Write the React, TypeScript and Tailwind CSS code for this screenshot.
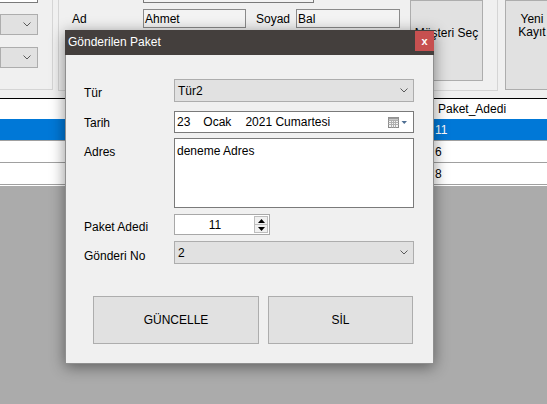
import React from 'react';

const Chevron = () => (
  <svg width="8" height="5" viewBox="0 0 8 5" className="shrink-0">
    <path d="M0.5 0.5 L4 4 L7.5 0.5" fill="none" stroke="#5a5a5a" strokeWidth="1" />
  </svg>
);

const Combo = ({ value, w }: { value: string; w: string }) => (
  <div className={`${w} h-[23px] border border-[#adadad] bg-[#e1e1e1] flex items-center pl-[3px] pr-[5px]`}>
    <span className="flex-1 leading-[14px]">{value}</span>
    <Chevron />
  </div>
);

const CalendarIcon = () => (
  <svg width="20" height="11" viewBox="0 0 20 11" className="shrink-0">
    <rect x="0.5" y="0.5" width="10" height="10" fill="#f4f4f4" stroke="#8a8a8a" />
    <path d="M0.5 3.5 H10.5 M0.5 5.5 H10.5 M0.5 7.5 H10.5 M3.5 3 V10.5 M5.5 3 V10.5 M7.5 3 V10.5" stroke="#b0b0b0" strokeWidth="1" />
    <rect x="0.5" y="0.5" width="10" height="2" fill="#9a9a9a" />
    <path d="M13.5 4 H19 L16.25 7 Z" fill="#4f6f93" />
  </svg>
);

const Spinner = () => (
  <div className="flex flex-col w-[14px] h-[17px] mr-[1px] border border-[#bdbdbd] bg-[#f0f0f0]">
    <div className="flex-1 flex items-center justify-center border-b border-[#bdbdbd]">
      <svg width="7" height="4" viewBox="0 0 7 4"><path d="M0 4 L3.5 0 L7 4 Z" fill="#000" /></svg>
    </div>
    <div className="flex-1 flex items-center justify-center">
      <svg width="7" height="4" viewBox="0 0 7 4"><path d="M0 0 L3.5 4 L7 0 Z" fill="#000" /></svg>
    </div>
  </div>
);

export default function App() {
  return (
    <div className="relative w-[547px] h-[404px] overflow-hidden bg-[#f0f0f0] text-[12px] text-black font-['Liberation_Sans',Arial,sans-serif]">
      {/* background window */}
      <div className="flex h-[98px]">
        <div className="w-[53px] h-[90px] border-r border-b border-[#d5d5d5] shrink-0">
          <div className="w-[38px] h-[3px] bg-white border-r border-b border-[#7a7a7a]" />
          <div className="mt-[11px] w-[38px] h-[21px] border border-[#adadad] bg-[#e1e1e1] flex items-center justify-end pr-[6px]">
            <Chevron />
          </div>
          <div className="mt-[12px] w-[38px] h-[21px] border border-[#adadad] bg-[#e1e1e1] flex items-center justify-end pr-[6px]">
            <Chevron />
          </div>
        </div>
        <div className="ml-[5px] w-[440px] h-[91px] border-l border-r border-b border-[#d5d5d5] flex shrink-0">
          <div className="w-[351px]">
            <div className="ml-[84px] w-[171px] h-[3px] border-x border-b border-[#7a7a7a] bg-[#f3f3f3]" />
            <div className="mt-[6px] flex h-[19px]">
              <div className="w-[84px] pl-[13px] flex items-center">Ad</div>
              <div className="w-[103px] border border-[#8a8a8a] bg-[#f3f3f3] pl-[1px] flex items-center">Ahmet</div>
              <div className="w-[50px] pl-[10px] flex items-center">Soyad</div>
              <div className="w-[104px] border border-[#8a8a8a] bg-[#f3f3f3] pl-[1px] flex items-center">Bal</div>
            </div>
          </div>
          <div className="w-[73px] h-[81px] border border-[#adadad] bg-[#e1e1e1] flex justify-center pt-[23px]">
            Müşteri Seç
          </div>
        </div>
        <div className="ml-[7px] w-[54px] h-[90px] border border-[#adadad] bg-[#e1e1e1] flex flex-col items-center pt-[12px] leading-[13px] shrink-0">
          <span>Yeni</span>
          <span>Kayıt</span>
        </div>
      </div>

      {/* grid */}
      <div className="border-t border-black bg-white">
        <div className="h-[20px] flex items-center pl-[438px]">Paket_Adedi</div>
        <div className="h-[22px] flex items-center pl-[435px] bg-[#0078d7] text-white border-b border-[#a0a0a0]">11</div>
        <div className="h-[22px] flex items-center pl-[435px] border-b border-[#a0a0a0]">6</div>
        <div className="h-[22px] flex items-center pl-[435px] border-b border-[#a0a0a0]">8</div>
        <div className="h-[1px]" />
      </div>
      <div className="h-[220px] bg-[#ababab]" />

      {/* dialog */}
      <div className="absolute left-[65px] top-[30px] w-[369px] shadow-[0_3px_14px_rgba(0,0,0,0.45)]">
        <div className="h-[25px] bg-[#443f3d] flex items-start">
          <span className="flex-1 pl-[3px] pt-[5px] text-white leading-[14px]">Gönderilen Paket</span>
          <div className="w-[19px] h-[20px] mt-[1px] bg-[#c75050] text-white font-bold text-[11px] flex items-center justify-center">x</div>
        </div>
        <div className="bg-[#f0f0f0] border-x border-b border-[#8f8f8f] pl-[18px] pt-[24px] pb-[19px]">
          <div className="flex">
            <div className="w-[90px] pt-[7px] leading-[14px]">Tür</div>
            <Combo value="Tür2" w="w-[240px]" />
          </div>
          <div className="flex mt-[9px]">
            <div className="w-[90px] pt-[5px] leading-[14px]">Tarih</div>
            <div className="w-[240px] h-[22px] border border-[#7a7a7a] bg-white flex items-center pl-[2px] pr-[5px]">
              <span>23</span>
              <span className="ml-[13px]">Ocak</span>
              <span className="ml-[14px] flex-1">2021 Cumartesi</span>
              <CalendarIcon />
            </div>
          </div>
          <div className="flex mt-[5px]">
            <div className="w-[90px] pt-[7px] leading-[14px]">Adres</div>
            <div className="w-[240px] h-[70px] border border-[#7a7a7a] bg-white pl-[2px] pt-[5px] leading-[14px]">deneme Adres</div>
          </div>
          <div className="flex mt-[6px]">
            <div className="w-[90px] pt-[6px] leading-[14px]">Paket Adedi</div>
            <div className="w-[96px] h-[21px] border border-[#a8a8a8] bg-white flex items-center">
              <span className="flex-1 text-center pl-[1px]">11</span>
              <Spinner />
            </div>
          </div>
          <div className="flex mt-[6px]">
            <div className="w-[90px] pt-[8px] leading-[14px]">Gönderi No</div>
            <Combo value="2" w="w-[240px]" />
          </div>
          <div className="flex gap-[9px] ml-[9px] mt-[32px]">
            <div className="w-[166px] h-[48px] border border-[#adadad] bg-[#e1e1e1] flex items-center justify-center">GÜNCELLE</div>
            <div className="w-[145px] h-[48px] border border-[#adadad] bg-[#e1e1e1] flex items-center justify-center">SİL</div>
          </div>
        </div>
      </div>
    </div>
  );
}
